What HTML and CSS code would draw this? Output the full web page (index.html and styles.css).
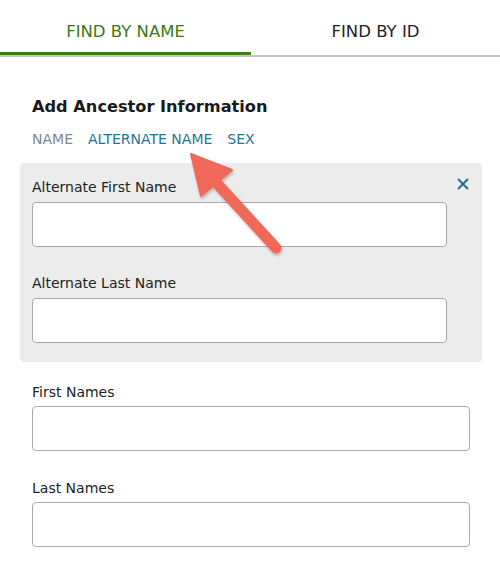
FILE: index.html
```html
<!DOCTYPE html>
<html lang="en">
<head>
<meta charset="utf-8">
<title>Add Ancestor</title>
<link rel="stylesheet" href="styles.css">
</head>
<body>
<div class="page">
  <nav class="tabs">
    <div class="tab active">FIND BY NAME</div>
    <div class="tab">FIND BY ID</div>
  </nav>
  <main class="content">
    <h2 class="heading">Add Ancestor Information</h2>
    <div class="subtabs">
      <span class="subtab muted">NAME</span>
      <span class="subtab">ALTERNATE NAME</span>
      <span class="subtab">SEX</span>
    </div>
    <section class="panel">
      <button class="close" aria-label="Close">
        <svg width="12" height="12" viewBox="0 0 12 12"><path d="M1 1 L11 11 M11 1 L1 11" stroke="#1f6f91" stroke-width="2" fill="none"/></svg>
      </button>
      <div class="field">
        <label class="label">Alternate First Name</label>
        <input class="input" type="text">
      </div>
      <div class="field">
        <label class="label">Alternate Last Name</label>
        <input class="input" type="text">
      </div>
    </section>
    <div class="fields">
      <div class="field">
        <label class="label">First Names</label>
        <input class="input" type="text">
      </div>
      <div class="field">
        <label class="label">Last Names</label>
        <input class="input" type="text">
      </div>
    </div>
  </main>
  <svg class="arrow" width="500" height="571" viewBox="0 0 500 571">
    <defs>
      <filter id="sh" x="-20%" y="-20%" width="140%" height="140%">
        <feDropShadow dx="1" dy="2" stdDeviation="1.5" flood-color="#000" flood-opacity="0.25"/>
      </filter>
    </defs>
    <g filter="url(#sh)" fill="#f0675a" stroke="#f0675a">
      <line x1="212" y1="178" x2="276" y2="248" stroke-width="11" stroke-linecap="round"/>
      <polygon points="191,154 232,170 201,196" stroke-width="2" stroke-linejoin="round"/>
    </g>
  </svg>
</div>
</body>
</html>
```

FILE: styles.css
```css
* { box-sizing: border-box; }
html, body { margin: 0; padding: 0; background: #fff; }
body { font-family: "DejaVu Sans", Verdana, sans-serif; color: #222; }
.page { position: relative; width: 500px; min-height: 571px; }

.tabs {
  display: grid;
  grid-template-columns: 251px 1fr;
  border-bottom: 2px solid #c4c4c4;
}
.tab {
  height: 55px;
  padding-top: 22px;
  font-size: 16.5px;
  line-height: 20px;
  text-align: center;
  color: #1e1e1e;
}
.tab.active {
  color: #3a7a12;
  box-shadow: inset 0 -3px 0 #3f7b16;
}

.content { padding-top: 40px; }
.heading {
  margin: 0 0 0 32px;
  font-size: 16.2px;
  line-height: 20px;
  font-weight: bold;
  color: #1a1a1a;
}
.subtabs {
  display: flex;
  gap: 15px;
  margin: 13px 0 0 32px;
  font-size: 14px;
  line-height: 18px;
}
.subtab { color: #1f7597; }
.subtab.muted { color: #80868c; }

.panel {
  position: relative;
  margin: 15px 18px 0 20px;
  padding: 15px 35px 19px 12px;
  background: #ebeceb;
  border-radius: 4px;
  display: flex;
  flex-direction: column;
  gap: 27px;
}
.close {
  position: absolute;
  top: 15px;
  right: 13px;
  width: 12px;
  height: 12px;
  padding: 0;
  border: 0;
  background: none;
  display: block;
}
.close svg { display: block; }

.field { display: flex; flex-direction: column; }
.label {
  font-size: 14px;
  line-height: 18px;
  color: #222;
  margin-bottom: 6px;
}
.input {
  height: 45px;
  width: 100%;
  border: 1px solid #a9a9a9;
  border-radius: 4px;
  background: #fff;
  font: inherit;
  padding: 0 8px;
}

.fields {
  margin: 21px 30px 0 32px;
  display: flex;
  flex-direction: column;
  gap: 28px;
}
.fields .label { margin-bottom: 5px; }

.arrow {
  position: absolute;
  left: 0;
  top: 0;
  pointer-events: none;
}
```
